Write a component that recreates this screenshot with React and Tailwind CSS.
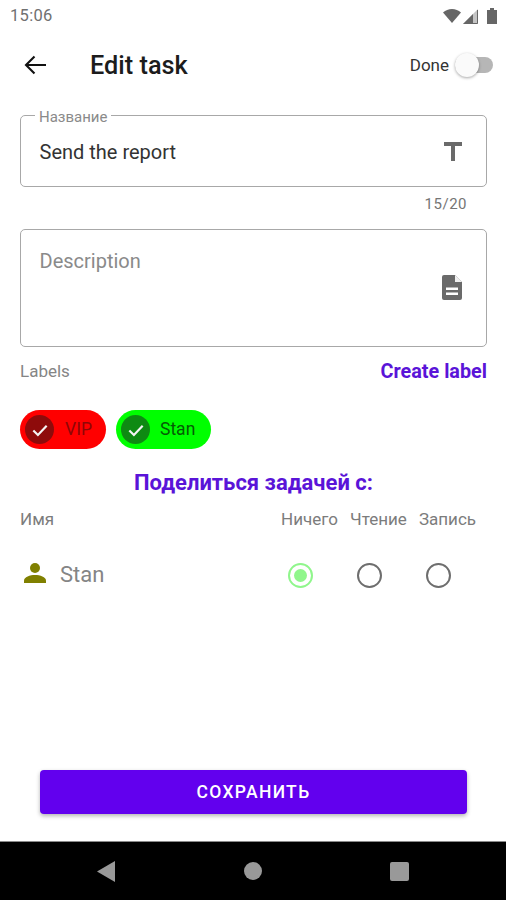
const F = { fontFamily: 'Roboto, sans-serif' };

function Check() {
  return (
    <svg width="20" height="20" viewBox="0 0 24 24" fill="none" stroke="#f4f4f4" strokeWidth="2.600">
      <path d="M4 12.500l5.500 5.500L20 7" />
    </svg>
  );
}

function Chip({ bg, dark, text, width, textClass }) {
  return (
    <div className={`flex h-[39px] items-center rounded-full pl-[5px] ${bg} ${width}`}>
      <div className={`flex h-[29px] w-[29px] items-center justify-center rounded-full ${dark}`}>
        <Check />
      </div>
      <span className={`text-[17.500px] ${textClass}`}>{text}</span>
    </div>
  );
}

function Radio({ checked }) {
  return (
    <div className="flex w-[69px] justify-center">
      <div className={`flex h-[25px] w-[25px] items-center justify-center rounded-full border-2 ${checked ? 'border-[#90f68c]' : 'border-[#6e6e6e]'}`}>
        {checked && <div className="h-[13px] w-[13px] rounded-full bg-[#90f68c]" />}
      </div>
    </div>
  );
}

export default function App() {
  return (
    <div className="flex h-[900px] w-[506px] flex-col overflow-hidden bg-white" style={F}>
      <div className="flex h-[32px] items-center justify-between pl-[10px] pr-[9px]">
        <span className="text-[16.500px] tracking-[0.300px] text-[#707070]">15:06</span>
        <div className="flex items-center gap-[2px]">
          <svg width="18" height="14" viewBox="0 0 18 14"><path d="M0 3.500C2.500 1.300 5.600 0 9 0s6.500 1.300 9 3.500L9 14z" fill="#666" /></svg>
          <svg width="15" height="15" viewBox="0 0 15 15"><path d="M15 0v15H0z" fill="#c4c4c4" /><path d="M14.500 1v13.500H1" fill="none" stroke="#666" strokeWidth="1" /><path d="M10 5v10H0z" fill="#666" /></svg>
          <svg width="10" height="16" viewBox="0 0 10 16" className="ml-[7px]"><path d="M3 0h4v2h3v14H0V2h3z" fill="#666" /></svg>
        </div>
      </div>

      <div className="flex h-[66px] items-center pl-[24px] pr-[13px]">
        <svg width="22" height="20" viewBox="0 0 22 20" fill="none" stroke="#111" strokeWidth="2.100">
          <path d="M22 10H2 M10.500 1.500L2 10l8.500 8.500" />
        </svg>
        <span className="ml-[44px] mt-[1px] text-[25.300px] font-medium text-[#1c1c1c]">Edit task</span>
        <span className="ml-auto mt-[2px] text-[17px] text-[#333]">Done</span>
        <div className="relative ml-[6px] h-[16px] w-[38px] rounded-full bg-[#b6b6b6]">
          <div className="absolute left-0 top-[-4px] h-[24px] w-[24px] rounded-full bg-[#fafafa] shadow-[0_1px_3px_rgba(0,0,0,0.35)]" />
        </div>
      </div>

      <div className="pl-[20px] pr-[19px] pt-[17px]">
        <div className="relative flex h-[72px] items-center justify-between rounded-[5px] border-[1.500px] border-[#a8a8a8] pl-[18.500px] pr-[24px]">
          <span className="absolute left-[14px] top-[-7.500px] bg-white px-[4px] text-[15px] leading-[16px] text-[#8a8a8a]">Название</span>
          <span className="mt-[2px] text-[20px] text-[#333]">Send the report</span>
          <svg width="18" height="19" viewBox="0 0 18 19"><path d="M0 0h18v4h-7v15H7V4H0z" fill="#6a6a6a" /></svg>
        </div>
        <div className="pr-[20px] pt-[7px] text-right text-[15px] leading-[20px] tracking-[0.500px] text-[#757575]">15/20</div>

        <div className="mt-[15px] flex h-[118px] rounded-[5px] border-[1.500px] border-[#a8a8a8] pl-[18.500px] pr-[24px]">
          <span className="pt-[19px] text-[20px] leading-[24px] text-[#8a8a8a]">Description</span>
          <svg className="ml-auto mt-[45px]" width="20" height="25" viewBox="0 0 20 25">
            <path d="M2 0h11l7 7v16a2 2 0 0 1-2 2H2a2 2 0 0 1-2-2V2a2 2 0 0 1 2-2z" fill="#6a6a6a" />
            <path d="M13 0v7h7z" fill="#fff" opacity="0.9" />
            <path d="M4 12.500h12v2.500H4zM4 17.500h12v2.500H4z" fill="#fff" />
          </svg>
        </div>

        <div className="mt-[12px] flex h-[26px] items-center justify-between">
          <span className="text-[17px] text-[#858585]">Labels</span>
          <span className="text-[19.800px] font-bold text-[#5a14d8]">Create label</span>
        </div>

        <div className="mt-[25px] flex gap-[10px]">
          <Chip bg="bg-[#ff0000]" dark="bg-[#8e0b0b]" text="VIP" width="w-[86px]" textClass="ml-[11px] text-[#8e0606]" />
          <Chip bg="bg-[#00ff00]" dark="bg-[#0e8a12]" text="Stan" width="w-[95px]" textClass="ml-[10px] text-[#055c05]" />
        </div>

        <div className="mt-[20px] h-[28px] text-center text-[22px] font-bold leading-[28px] text-[#5a14d8]">Поделиться задачей с:</div>

        <div className="mt-[13px] flex h-[20px] items-center text-[17px] text-[#7c7c7c]">
          <span>Имя</span>
          <span className="ml-auto flex pr-[5px]">
            <span className="w-[69px] text-center">Ничего</span>
            <span className="w-[69px] text-center">Чтение</span>
            <span className="w-[69px] text-center">Запись</span>
          </span>
        </div>

        <div className="mt-[32px] flex h-[26px] items-center">
          <svg className="mb-[5px] ml-[4px]" width="22" height="20" viewBox="0 0 22 20">
            <circle cx="11" cy="5" r="5" fill="#808000" />
            <path d="M0 20v-2.500C0 14 6 12 11 12s11 2 11 5.500V20z" fill="#808000" />
          </svg>
          <span className="mb-[2px] ml-[14px] text-[22px] text-[#858585]">Stan</span>
          <div className="ml-auto flex pr-[14px]">
            <Radio checked />
            <Radio />
            <Radio />
          </div>
        </div>
      </div>

      <div className="mt-auto pb-[27px] pl-[40px] pr-[39px]">
        <div className="flex h-[44px] items-center justify-center rounded-[4px] bg-[#6200ee] pt-[1px] text-[17.500px] font-medium tracking-[1.300px] text-white shadow-[0_2px_4px_rgba(0,0,0,0.3)]">
          СОХРАНИТЬ
        </div>
      </div>

      <div className="flex h-[59px] items-center border-t border-[#8a8a8a] bg-black">
        <div className="flex w-full items-center pl-[97px]">
          <svg width="18" height="21" viewBox="0 0 18 21"><path d="M18 0v21L0 10.500z" fill="#999" /></svg>
          <div className="ml-[129px] h-[18px] w-[18px] rounded-full bg-[#999]" />
          <div className="ml-[128px] h-[19px] w-[19px] rounded-[2px] bg-[#999]" />
        </div>
      </div>
    </div>
  );
}
